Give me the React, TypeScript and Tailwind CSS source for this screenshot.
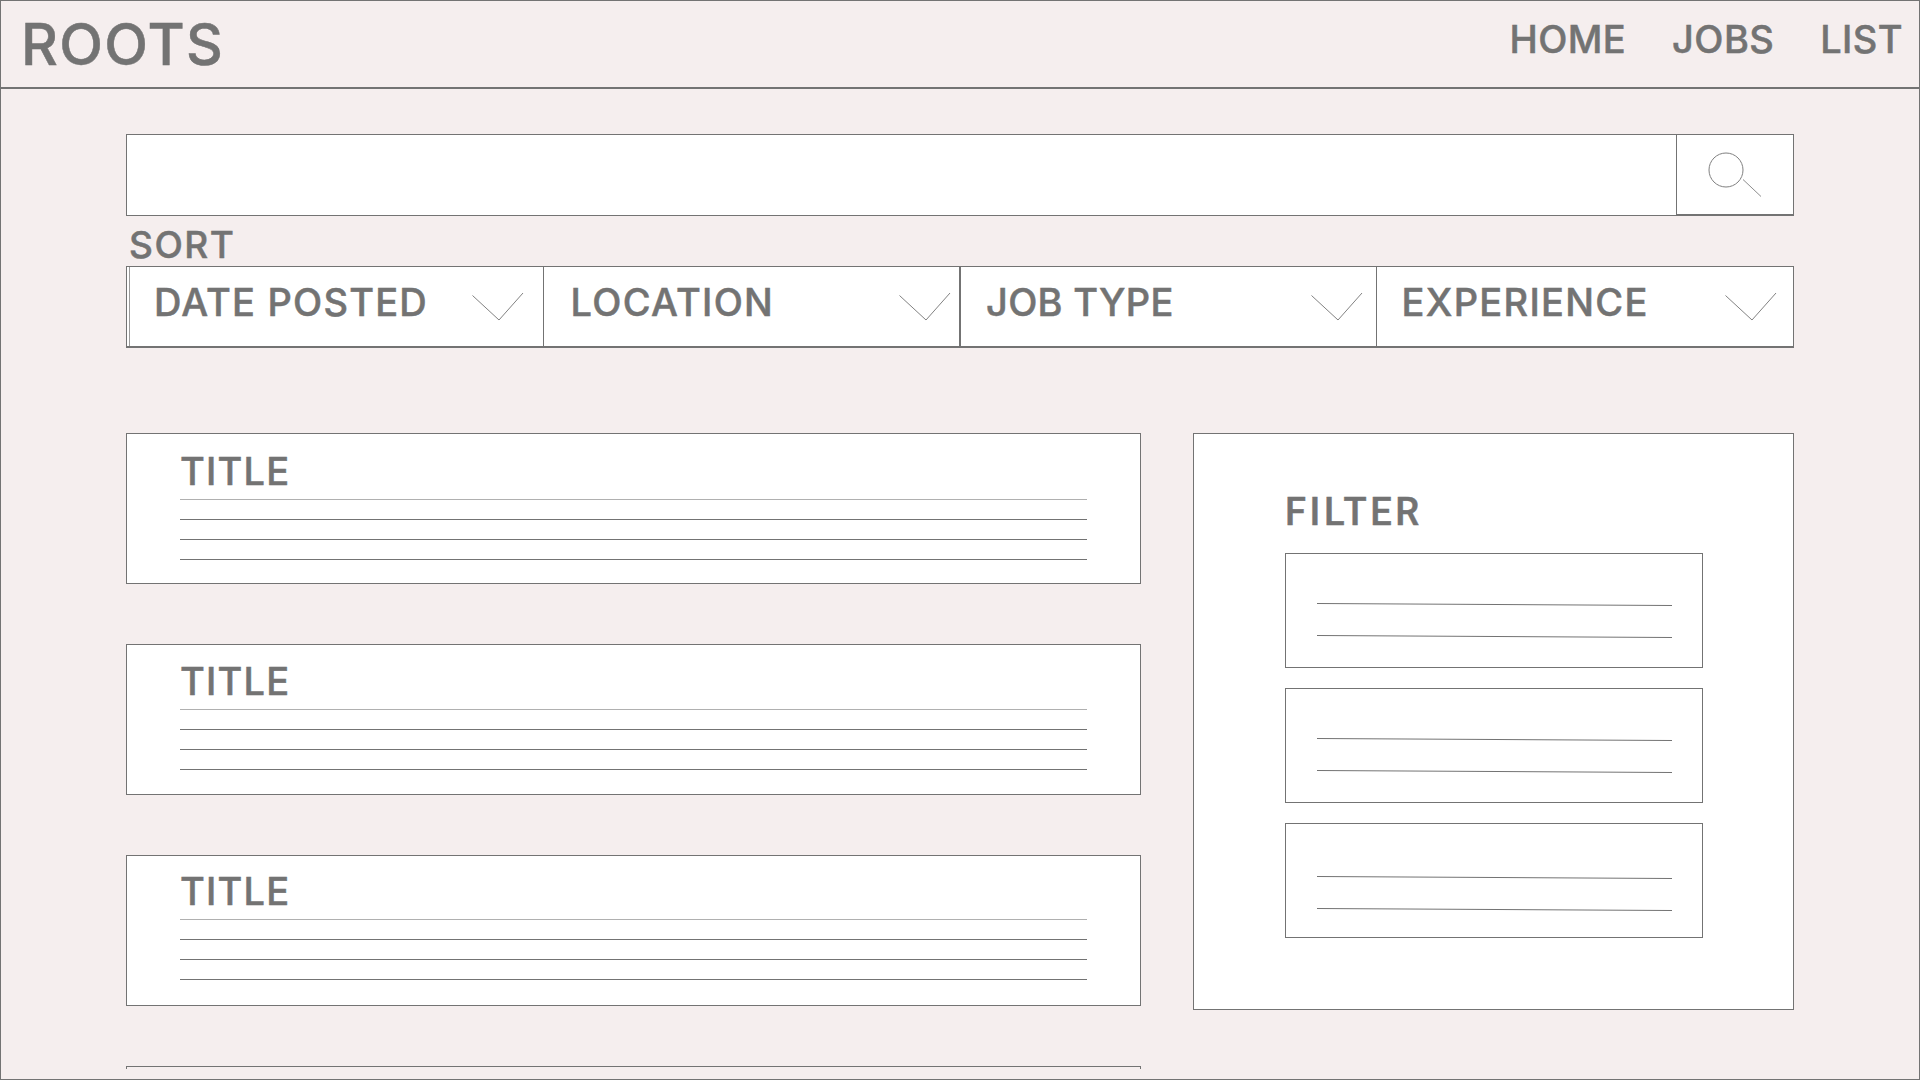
const sortOptions = [
  { label: 'DATE POSTED', chevron: 'mr-[19px]', cell: 'ml-[2px] border-l border-l-[#9a9a9a] border-r pl-[24px]', text: 'tracking-[1.2px]' },
  { label: 'LOCATION', chevron: 'mr-[8px]', cell: 'border-r pl-[27px]', text: 'tracking-[1.3px]' },
  { label: 'JOB TYPE', chevron: 'mr-[13px]', cell: 'border-r border-l pl-[25px]', text: 'tracking-[0.3px]' },
  { label: 'EXPERIENCE', chevron: 'mr-[16px]', cell: 'pl-[25px]', text: 'tracking-[1.3px]' },
];

const filterBoxes = ['pt-[49px]', 'pt-[49px]', 'pt-[52px]'];

function Chevron({ className }: { className: string }) {
  return (
    <svg width="52" height="30" viewBox="0 0 52 30" fill="none" className={className}>
      <path d="M0.5 3.5L27 28L51 1" stroke="#737373" strokeWidth="0.9" />
    </svg>
  );
}

function SearchIcon() {
  return (
    <svg width="54" height="46" viewBox="0 0 54 46" fill="none">
      <circle cx="18" cy="18" r="17" stroke="#808080" strokeWidth="1" />
      <path d="M35 27.5L53 44.5" stroke="#808080" strokeWidth="0.9" />
    </svg>
  );
}

function SkewLine() {
  return (
    <svg width="355" height="3" viewBox="0 0 355 3" className="block">
      <line x1="0" y1="0.5" x2="355" y2="2.5" stroke="#737373" strokeWidth="1" />
    </svg>
  );
}

function JobCard({ padding }: { padding: string }) {
  return (
    <div className={`h-[151px] border border-[#737373] bg-white pl-[53px] ${padding}`}>
      <div className="text-[38px] leading-none font-medium tracking-[1.2px]">TITLE</div>
      <div className="mt-[9px] flex w-[907px] flex-col gap-[19px]">
        <div className="h-px bg-[#b0b0b0]" />
        <div className="h-px bg-[#737373]" />
        <div className="h-px bg-[#737373]" />
        <div className="h-px bg-[#737373]" />
      </div>
    </div>
  );
}

export default function App() {
  return (
    <div className="flex h-[1080px] w-[1920px] flex-col overflow-hidden border border-[#737373] bg-[#f5eeee] font-['Inter',sans-serif] text-[#737373] [-webkit-text-stroke:0.5px_#737373]">
      {/* Header */}
      <header className="flex h-[88px] shrink-0 items-start justify-between border-b-2 border-[#737373] pr-[16px] pl-[20px]">
        <div className="pt-[15px] text-[57px] leading-none font-medium tracking-[1.3px]">ROOTS</div>
        <nav className="flex gap-[46px] pt-[19px] text-[38px] leading-none font-medium tracking-[0.4px]">
          <span>HOME</span>
          <span>JOBS</span>
          <span>LIST</span>
        </nav>
      </header>

      <main className="pt-[45px] pl-[125px]">
        {/* Search */}
        <div className="flex h-[82px] w-[1668px] border border-[#737373] bg-white">
          <div className="flex-1" />
          <button className="-mb-px flex w-[117px] items-center justify-center border-b-2 border-l border-[#737373]">
            <SearchIcon />
          </button>
        </div>

        {/* Sort */}
        <div className="mt-[10px] ml-[3px] text-[37px] leading-none font-medium tracking-[1.5px]">SORT</div>
        <div className="mt-[3px] grid h-[82px] w-[1668px] grid-cols-4 border border-b-2 border-[#737373] bg-white">
          {sortOptions.map((option) => (
            <div
              key={option.label}
              className={`flex items-start justify-between border-[#737373] pt-[16px] ${option.cell}`}
            >
              <span className={`text-[38px] leading-none font-medium ${option.text}`}>{option.label}</span>
              <Chevron className={`mt-[9px] ${option.chevron}`} />
            </div>
          ))}
        </div>

        <div className="mt-[85px] flex w-[1668px] items-start justify-between">
          {/* Job list */}
          <div className="flex w-[1015px] flex-col gap-[60px]">
            <JobCard padding="pt-[18px]" />
            <JobCard padding="pt-[17px]" />
            <JobCard padding="pt-[16px]" />
            <div className="h-[3px] border border-b-0 border-[#737373]" />
          </div>

          {/* Filter */}
          <aside className="h-[577px] w-[601px] border border-[#737373] bg-white pt-[59px] pl-[91px]">
            <div className="font-['Roboto',sans-serif] text-[38px] leading-none font-medium tracking-[3.6px]">FILTER</div>
            <div className="mt-[22px] flex w-[418px] flex-col gap-[20px]">
              {filterBoxes.map((padding, i) => (
                <div key={i} className={`h-[115px] border border-[#737373] pl-[31px] ${padding}`}>
                  <SkewLine />
                  <div className="mt-[29px]">
                    <SkewLine />
                  </div>
                </div>
              ))}
            </div>
          </aside>
        </div>
      </main>
    </div>
  );
}
